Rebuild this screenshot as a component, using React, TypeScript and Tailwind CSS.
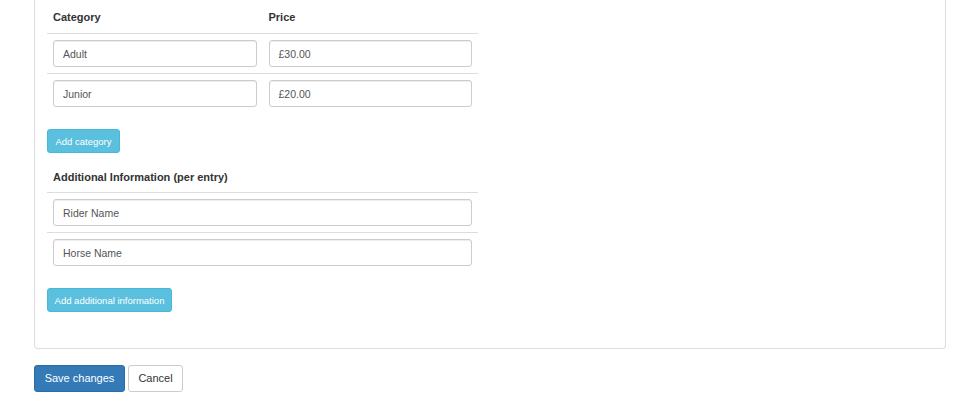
import React from 'react'

const categories = [
  { name: 'Adult', price: '£30.00' },
  { name: 'Junior', price: '£20.00' },
]

const extraFields = ['Rider Name', 'Horse Name']

function TextInput({ value }: { value: string }) {
  return (
    <input
      readOnly
      value={value}
      className="block w-full h-[27px] px-[9px] text-[10.5px] text-[#555] bg-white border border-[#ccc] rounded-[3px] shadow-[inset_0_1px_1px_rgba(0,0,0,0.075)] outline-none"
    />
  )
}

export default function App() {
  return (
    <div className="w-[966px] h-[399px] bg-white font-['Liberation_Sans',Arial,sans-serif] text-[10.5px] text-[#333] leading-[15px]">
      <div className="ml-[34px] w-[912px]">
        {/* panel */}
        <div className="border-x border-b border-[#ddd] rounded-b-[4px] pl-[12px] pb-[36px]">
          <div className="w-[431px]">
            {/* categories table */}
            <div className="grid grid-cols-2 font-bold text-[11px] border-b border-[#ddd]">
              <div className="px-[6px] pt-[10px] pb-[8px]">Category</div>
              <div className="px-[6px] pt-[10px] pb-[8px]">Price</div>
            </div>
            {categories.map((c, i) => (
              <div
                key={c.name}
                className={`grid grid-cols-2 ${i < categories.length - 1 ? 'border-b border-[#ddd]' : ''}`}
              >
                <div className="p-[6px]">
                  <TextInput value={c.name} />
                </div>
                <div className="p-[6px]">
                  <TextInput value={c.price} />
                </div>
              </div>
            ))}

            <button className="mt-[16px] w-[73px] h-[24px] text-[9.5px] text-white bg-[#5bc0de] border border-[#46b8da] rounded-[3px]">
              Add category
            </button>

            {/* additional information */}
            <div className="font-bold text-[11px] px-[6px] pt-[17px] pb-[7px] border-b border-[#ddd]">
              Additional Information (per entry)
            </div>
            {extraFields.map((f, i) => (
              <div
                key={f}
                className={`p-[6px] ${i < extraFields.length - 1 ? 'border-b border-[#ddd]' : ''}`}
              >
                <TextInput value={f} />
              </div>
            ))}

            <button className="mt-[16px] w-[125px] h-[24px] text-[9.5px] text-white bg-[#5bc0de] border border-[#46b8da] rounded-[3px]">
              Add additional information
            </button>
          </div>
        </div>

        {/* actions */}
        <div className="flex gap-[3px] mt-[16px]">
          <button className="w-[91px] h-[27px] text-[11px] text-white bg-[#337ab7] border border-[#2e6da4] rounded-[3px]">
            Save changes
          </button>
          <button className="w-[55px] h-[27px] text-[11px] text-[#333] bg-white border border-[#ccc] rounded-[3px]">
            Cancel
          </button>
        </div>
      </div>
    </div>
  )
}
